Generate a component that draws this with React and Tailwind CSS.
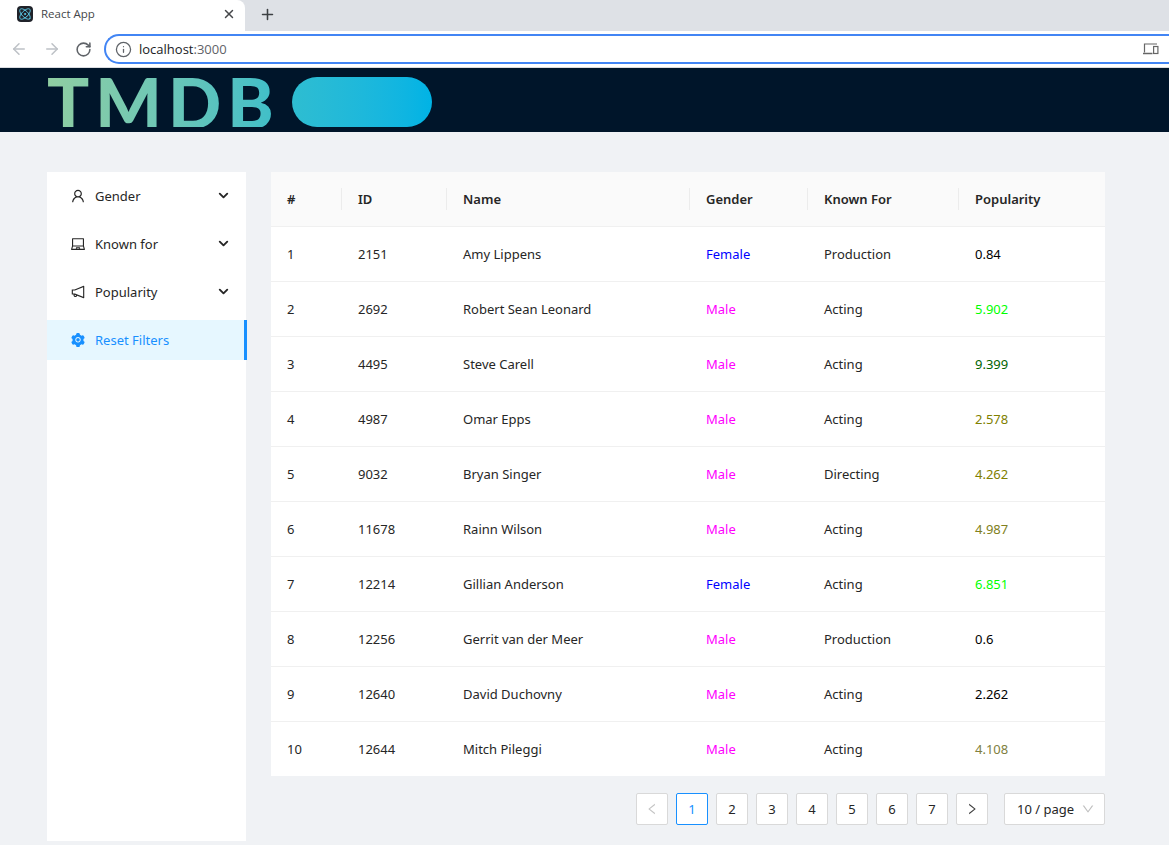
import React from 'react';
import { ChevronDown, RotateCw, ArrowLeft, ArrowRight, Info, X, Plus, Atom } from 'lucide-react';
import { AiOutlineUser, AiOutlineLaptop, AiOutlineNotification, AiFillSetting, AiOutlineLeft, AiOutlineRight, AiOutlineDown } from 'react-icons/ai';

const people = [
  { id: 2151, name: 'Amy Lippens', gender: 'Female', known: 'Production', pop: '0.84', color: 'text-[#000000]' },
  { id: 2692, name: 'Robert Sean Leonard', gender: 'Male', known: 'Acting', pop: '5.902', color: 'text-[#00ff00]' },
  { id: 4495, name: 'Steve Carell', gender: 'Male', known: 'Acting', pop: '9.399', color: 'text-[#006400]' },
  { id: 4987, name: 'Omar Epps', gender: 'Male', known: 'Acting', pop: '2.578', color: 'text-[#808000]' },
  { id: 9032, name: 'Bryan Singer', gender: 'Male', known: 'Directing', pop: '4.262', color: 'text-[#808000]' },
  { id: 11678, name: 'Rainn Wilson', gender: 'Male', known: 'Acting', pop: '4.987', color: 'text-[#808020]' },
  { id: 12214, name: 'Gillian Anderson', gender: 'Female', known: 'Acting', pop: '6.851', color: 'text-[#00ff00]' },
  { id: 12256, name: 'Gerrit van der Meer', gender: 'Male', known: 'Production', pop: '0.6', color: 'text-[#000000]' },
  { id: 12640, name: 'David Duchovny', gender: 'Male', known: 'Acting', pop: '2.262', color: 'text-[#000000]' },
  { id: 12644, name: 'Mitch Pileggi', gender: 'Male', known: 'Acting', pop: '4.108', color: 'text-[#808040]' },
];

const columns = ['#', 'ID', 'Name', 'Gender', 'Known For', 'Popularity'];

const DevicesIcon = () => (
  <svg width="16" height="12" viewBox="0 0 16 12" fill="none" stroke="#666" strokeWidth="1.2">
    <path d="M1.5 9.5V1h12.5" />
    <path d="M0 10.5h9.5" strokeWidth="1.5" />
    <rect x="10.6" y="3.5" width="4.3" height="7" />
  </svg>
);

const menuItems = [
  { label: 'Gender', icon: <AiOutlineUser size={16} /> },
  { label: 'Known for', icon: <AiOutlineLaptop size={16} /> },
  { label: 'Popularity', icon: <AiOutlineNotification size={16} /> },
];

const BrowserBar = () => (
  <div className="h-[68px] shrink-0 bg-white border-b border-[#dadce0] font-['Liberation_Sans',sans-serif]">
    <div className="h-[31px] bg-[#dee1e6] flex items-stretch">
      <div className="w-[245px] bg-white rounded-tr-lg flex items-center pl-[17px] pr-[9px] pb-[3px]">
        <span className="w-4 h-4 rounded-sm bg-[#20232a] flex items-center justify-center">
          <Atom size={14} className="text-[#61dafb]" strokeWidth={1.5} />
        </span>
        <span className="ml-2 text-[11.5px] text-[#45474a] font-['Open_Sans',sans-serif]">React App</span>
        <X size={14} strokeWidth={2.5} className="ml-auto text-[#45474a]" />
      </div>
      <div className="flex items-center pl-[14px] pb-[3px]">
        <Plus size={17} strokeWidth={2.2} className="text-[#3c4043]" />
      </div>
    </div>
    <div className="h-[36px] flex items-center pl-[10px]">
      <ArrowLeft size={18} strokeWidth={2} className="text-[#bdc1c6]" />
      <ArrowRight size={18} strokeWidth={2} className="ml-[15px] text-[#bdc1c6]" />
      <RotateCw size={17} strokeWidth={2.2} className="ml-[14px] text-[#5f6368]" />
      <div className="ml-[12px] flex-1 h-[30px] rounded-l-full border-2 border-r-0 border-[#4285f4] flex items-center pl-[9px] pr-[10px]">
        <Info size={17} strokeWidth={1.8} className="text-[#5f6368]" />
        <span className="ml-[7px] pt-[2px] text-[13px] text-[#202124] font-['Open_Sans',sans-serif]">
          localhost<span className="text-[#5f6368]">:3000</span>
        </span>
        <span className="ml-auto flex"><DevicesIcon /></span>
      </div>
    </div>
  </div>
);

const Logo = () => (
  <header className="h-16 shrink-0 bg-[#00152a] flex items-start pt-[9px] pl-[47px]">
    <span className="block h-[50px] text-[70px] leading-[50px] font-black tracking-[6px] font-['Lato',sans-serif] bg-gradient-to-r from-[#90cea1] to-[#3cbec9] bg-clip-text text-transparent">
      TMDB
    </span>
    <div className="ml-[12px] w-[140px] h-[50px] rounded-full bg-gradient-to-r from-[#2ebdd1] to-[#00b3e5]" />
  </header>
);

const Sidebar = () => (
  <aside className="w-[199px] shrink-0 bg-white h-[669px]">
    <ul className="pt-1">
      {menuItems.map((item) => (
        <li key={item.label} className="h-10 mb-2 flex items-center pl-[23px] pr-[15px] text-[#262626]">
          {item.icon}
          <span className="ml-[9px] pt-[2px]">{item.label}</span>
          <ChevronDown size={15} strokeWidth={3} className="ml-auto text-[#262626] -mt-[2px]" />
        </li>
      ))}
      <li className="h-10 flex items-center pl-[23px] text-[#1890ff] bg-[#e6f7ff] border-r-[3px] border-[#1890ff] -mr-[1px]">
        <AiFillSetting size={16} />
        <span className="ml-[9px] pt-[2px]">Reset Filters</span>
      </li>
    </ul>
  </aside>
);

const PeopleTable = () => (
  <div className="bg-white">
    <table className="w-[834px] table-fixed border-collapse text-left">
      <colgroup>
        <col className="w-[71px]" />
        <col className="w-[105px]" />
        <col className="w-[243px]" />
        <col className="w-[118px]" />
        <col className="w-[151px]" />
        <col className="w-[146px]" />
      </colgroup>
      <thead>
        <tr className="h-[54px] bg-[#fafafa] border-b border-[#f0f0f0]">
          {columns.map((col, index) => (
            <th key={col} className="relative px-4 pt-[2px] font-semibold text-[#262626]">
              {col}
              {index > 0 && <span className="absolute -left-px top-[16px] h-[22px] w-px bg-[#ececec]" />}
            </th>
          ))}
        </tr>
      </thead>
      <tbody>
        {people.map((p, index) => (
          <tr key={p.id} className="h-[55px] border-b border-[#f0f0f0] last:border-b-0 text-[#262626]">
            <td className="px-4 pt-[2px]">{index + 1}</td>
            <td className="px-4 pt-[2px]">{p.id}</td>
            <td className="px-4 pt-[2px]">{p.name}</td>
            <td className={`px-4 pt-[2px] ${p.gender === 'Female' ? 'text-[#0000ff]' : 'text-[#ff00ff]'}`}>{p.gender}</td>
            <td className="px-4 pt-[2px]">{p.known}</td>
            <td className={`px-4 pt-[2px] ${p.color}`}>{p.pop}</td>
          </tr>
        ))}
      </tbody>
    </table>
  </div>
);

const Pagination = () => (
  <div className="mt-[17px] flex justify-end items-center gap-2 text-[#262626]">
    <span className="w-8 h-8 flex items-center justify-center bg-white border border-[#d9d9d9] rounded-[2px] text-[#c4c4c4]">
      <AiOutlineLeft size={14} />
    </span>
    {[1, 2, 3, 4, 5, 6, 7].map((n) => (
      <span
        key={n}
        className={`w-8 h-8 pt-[2px] flex items-center justify-center bg-white border rounded-[2px] ${
          n === 1 ? 'border-[#1890ff] text-[#1890ff]' : 'border-[#d9d9d9]'
        }`}
      >
        {n}
      </span>
    ))}
    <span className="w-8 h-8 flex items-center justify-center bg-white border border-[#d9d9d9] rounded-[2px] text-[#404040]">
      <AiOutlineRight size={14} />
    </span>
    <span className="ml-2 w-[101px] h-8 flex items-center bg-white border border-[#d9d9d9] rounded-[2px] pl-3 pr-[9px]">
      <span className="pt-[2px]">10 / page</span>
      <AiOutlineDown size={14} className="ml-auto text-[#bfbfbf]" />
    </span>
  </div>
);

export default function App() {
  return (
    <div className="h-[845px] overflow-hidden flex flex-col bg-[#f0f2f5] text-[13px] font-['Noto_Sans',sans-serif]">
      <BrowserBar />
      <Logo />
      <main className="flex gap-[25px] pl-[47px] pt-10">
        <Sidebar />
        <div className="w-[834px]">
          <PeopleTable />
          <Pagination />
        </div>
      </main>
    </div>
  );
}
